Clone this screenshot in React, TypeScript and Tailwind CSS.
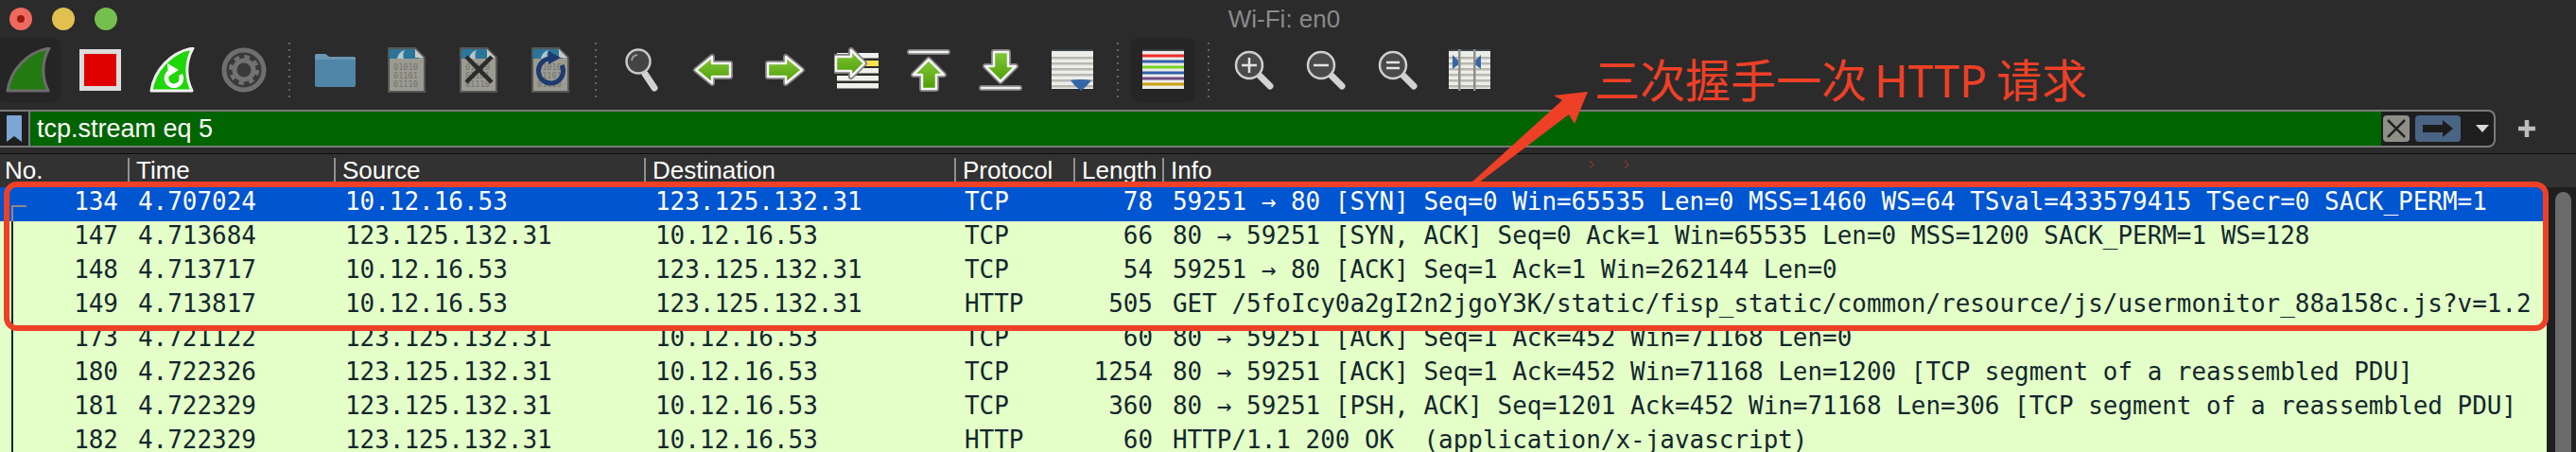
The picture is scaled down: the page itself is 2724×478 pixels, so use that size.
import type { ReactNode } from 'react'

const MONO = "font-['DejaVu_Sans_Mono','Liberation_Mono',monospace]"
const COLS = 'grid grid-cols-[135px_218px_328px_328px_126px_94px_1fr]'

const ROWS = [
  ['134', '4.707024', '10.12.16.53', '123.125.132.31', 'TCP', '78', '59251 → 80 [SYN] Seq=0 Win=65535 Len=0 MSS=1460 WS=64 TSval=433579415 TSecr=0 SACK_PERM=1'],
  ['147', '4.713684', '123.125.132.31', '10.12.16.53', 'TCP', '66', '80 → 59251 [SYN, ACK] Seq=0 Ack=1 Win=65535 Len=0 MSS=1200 SACK_PERM=1 WS=128'],
  ['148', '4.713717', '10.12.16.53', '123.125.132.31', 'TCP', '54', '59251 → 80 [ACK] Seq=1 Ack=1 Win=262144 Len=0'],
  ['149', '4.713817', '10.12.16.53', '123.125.132.31', 'HTTP', '505', 'GET /5foIcy0a2gI2n2jgoY3K/static/fisp_static/common/resource/js/usermonitor_88a158c.js?v=1.2'],
  ['173', '4.721122', '123.125.132.31', '10.12.16.53', 'TCP', '60', '80 → 59251 [ACK] Seq=1 Ack=452 Win=71168 Len=0'],
  ['180', '4.722326', '123.125.132.31', '10.12.16.53', 'TCP', '1254', '80 → 59251 [ACK] Seq=1 Ack=452 Win=71168 Len=1200 [TCP segment of a reassembled PDU]'],
  ['181', '4.722329', '123.125.132.31', '10.12.16.53', 'TCP', '360', '80 → 59251 [PSH, ACK] Seq=1201 Ack=452 Win=71168 Len=306 [TCP segment of a reassembled PDU]'],
  ['182', '4.722329', '123.125.132.31', '10.12.16.53', 'HTTP', '60', 'HTTP/1.1 200 OK  (application/x-javascript)'],
]

const HEADERS = ['No.', 'Time', 'Source', 'Destination', 'Protocol', 'Length', 'Info']

function Icon({ children }: { children: ReactNode }) {
  return <svg width={48} height={48} viewBox="0 0 48 48" fill="none">{children}</svg>
}

function Slot({ pressed, children }: { pressed?: boolean; children: ReactNode }) {
  return (
    <div className="w-[76px] flex justify-center">
      <div className={`w-[68px] h-[68px] rounded-lg flex items-center justify-center ${pressed ? 'bg-[#252525]' : ''}`}>
        {children}
      </div>
    </div>
  )
}

function Sep() {
  return (
    <div className="w-5 flex flex-col items-center gap-[5px]">
      {Array.from({ length: 9 }).map((_, i) => <div key={i} className="w-[2px] h-[2px] bg-[#666]" />)}
    </div>
  )
}

function GreenShape({ id, points }: { id: string; points: string }) {
  return (
    <>
      <defs>
        <linearGradient id={id} x1="0" y1="0" x2="0" y2="1">
          <stop offset="0" stopColor="#82c83a" />
          <stop offset="1" stopColor="#4f9e05" />
        </linearGradient>
      </defs>
      <polygon points={points} fill="none" stroke="#7e7e7e" strokeWidth={6} strokeLinejoin="round" />
      <polygon points={points} fill={`url(#${id})`} stroke="#f4f4f4" strokeWidth={2.5} strokeLinejoin="round" />
    </>
  )
}

const FIN = 'M2 46 C5 25 22 5 46 1 C38 15 38 32 45 46 Z'

function DocIcon({ children }: { children?: ReactNode }) {
  return (
    <Icon>
      <path d="M5 1 H33 L43 11 V47 H5 Z" fill="#9b9b91" stroke="#565656" strokeWidth={2} />
      <path d="M6 2 H32 L37 8 V12 H6 Z" fill="#2a769b" />
      <path d="M14 12 C15 7 18 4 22 3 C20 6 20 9 21 12 Z" fill="#b9c4c6" />
      <path d="M33 2 L42 11 H33 Z" fill="#c9c9c2" />
      {['01010', '01101', '01110'].map((t, i) => (
        <text key={t} x={10} y={24 + i * 9} fontSize={8.6} fill="#74746e" fontFamily="DejaVu Sans Mono, monospace">{t}</text>
      ))}
      {children}
    </Icon>
  )
}

function Lens({ children }: { children?: ReactNode }) {
  return (
    <Icon>
      <path d="M30 30 L41 41" stroke="#d2d2d2" strokeWidth={7} strokeLinecap="round" />
      <circle cx={19} cy={19} r={14} fill="#4a4a4a" stroke="#cfcfcf" strokeWidth={2.5} />
      {children}
    </Icon>
  )
}

function Stripes({ children }: { children?: ReactNode }) {
  return (
    <>
      <rect x={2} y={2} width={44} height={42} fill="#ecece8" />
      <rect x={2} y={2} width={44} height={2} fill="#3a4248" />
      {[10, 16, 22, 28, 34, 40].map(y => <rect key={y} x={2} y={y} width={44} height={2.5} fill="#b8b8b0" />)}
      {children}
    </>
  )
}

function Toolbar() {
  return (
    <div className="h-[68px] flex items-center -ml-2 shrink-0">
      <Slot pressed>
        <Icon>
          <path d={FIN} fill="#237a10" stroke="#6c6c6c" strokeWidth={3} strokeLinejoin="round" />
        </Icon>
      </Slot>
      <Slot>
        <Icon>
          <rect x={2} y={2} width={44} height={44} fill="#dcdcdc" />
          <rect x={7} y={7} width={34} height={34} fill="#e00000" />
        </Icon>
      </Slot>
      <Slot>
        <Icon>
          <path d={FIN} fill="#1fd608" stroke="#f2f2f2" strokeWidth={3} strokeLinejoin="round" />
          <path d="M33 29 A8 8 0 1 1 24 25" stroke="#fff" strokeWidth={4.5} />
          <path d="M19 17 L31 24 L20 31 Z" fill="#fff" />
        </Icon>
      </Slot>
      <Slot>
        <Icon>
          <circle cx={24} cy={24} r={21} fill="#3a3a3a" stroke="#6f6f6f" strokeWidth={5} />
          <circle cx={24} cy={24} r={10} stroke="#727272" strokeWidth={5} />
          <circle cx={24} cy={24} r={14} stroke="#727272" strokeWidth={4} strokeDasharray="5.5 5.5" />
        </Icon>
      </Slot>
      <Sep />
      <Slot>
        <Icon>
          <path d="M3 9 Q3 7 5 7 H14 L18 10 H44 Q46 10 46 12 V40 Q46 42 44 42 H5 Q3 42 3 40 Z" fill="#4f86a8" />
          <path d="M3 13 V9 Q3 7 5 7 H14 L18 10 H44 Q46 10 46 12 V13 Z" fill="#6a97b4" />
        </Icon>
      </Slot>
      <Slot><DocIcon /></Slot>
      <Slot>
        <DocIcon>
          <path d="M11 10 L38 37 M38 10 L11 37" stroke="#2b2b2b" strokeWidth={4.5} />
        </DocIcon>
      </Slot>
      <Slot>
        <DocIcon>
          <path d="M36 19 A13 13 0 1 1 24 12" stroke="#1e3a6e" strokeWidth={5} />
          <path d="M22 4 L35 11 L22 18 Z" fill="#1e3a6e" />
        </DocIcon>
      </Slot>
      <Sep />
      <Slot>
        <Icon>
          <path d="M28 28 L38 43" stroke="#d2d2d2" strokeWidth={7} strokeLinecap="round" />
          <circle cx={21} cy={15} r={12.5} fill="#444" stroke="#c9c9c9" strokeWidth={2.5} />
          <path d="M14 14 A7 7 0 0 1 20 8" stroke="#9a9a9a" strokeWidth={2} />
        </Icon>
      </Slot>
      <Slot>
        <Icon><GreenShape id="g-left" points="6,24 23,10 23,17 42,17 42,31 23,31 23,38" /></Icon>
      </Slot>
      <Slot>
        <Icon><GreenShape id="g-right" points="42,24 25,10 25,17 6,17 6,31 25,31 25,38" /></Icon>
      </Slot>
      <Slot>
        <Icon>
          {[6, 14, 22, 30, 38].map(y => <rect key={y} x={3} y={y} width={44} height={5.5} fill="#efefeb" />)}
          <rect x={32} y={14} width={15} height={6} fill="#fbe04f" />
          <GreenShape id="g-goto" points="32,17 18,3 18,10 2,10 2,25 18,25 18,31" />
        </Icon>
      </Slot>
      <Slot>
        <Icon>
          <path d="M4 5 H44" stroke="#7e7e7e" strokeWidth={6} strokeLinecap="round" />
          <path d="M4 5 H44" stroke="#f0f0f0" strokeWidth={2.5} strokeLinecap="round" />
          <GreenShape id="g-top" points="24,13 40,29 32,29 32,44 17,44 17,29 8,29" />
        </Icon>
      </Slot>
      <Slot>
        <Icon>
          <path d="M4 43 H44" stroke="#7e7e7e" strokeWidth={6} strokeLinecap="round" />
          <path d="M4 43 H44" stroke="#f0f0f0" strokeWidth={2.5} strokeLinecap="round" />
          <GreenShape id="g-bottom" points="24,36 40,20 32,20 32,5 17,5 17,20 8,20" />
        </Icon>
      </Slot>
      <Slot>
        <Icon>
          <Stripes>
            <path d="M22 35 Q32 33 44 35 Q40 41 33 46 Q26 41 22 35 Z" fill="#3467a8" />
          </Stripes>
        </Icon>
      </Slot>
      <Sep />
      <Slot pressed>
        <Icon>
          <rect x={2} y={2} width={44} height={42} fill="#ecece8" />
          <rect x={2} y={2} width={44} height={2} fill="#3a4248" />
          {['#ee2b2b', '#2f5fa8', '#76d321', '#2f5fa8', '#6f4a84', '#c9a010'].map((c, i) => (
            <rect key={i} x={2} y={7.5 + i * 6} width={44} height={3} fill={c} />
          ))}
        </Icon>
      </Slot>
      <Sep />
      <Slot>
        <Lens><path d="M11 19 H27 M19 11 V27" stroke="#e4e4e4" strokeWidth={2.5} /></Lens>
      </Slot>
      <Slot>
        <Lens><path d="M11 19 H27" stroke="#e4e4e4" strokeWidth={2.5} /></Lens>
      </Slot>
      <Slot>
        <Lens><path d="M12 16 H26 M12 22 H26" stroke="#e4e4e4" strokeWidth={2.5} /></Lens>
      </Slot>
      <Slot>
        <Icon>
          <Stripes>
            <path d="M6 8 L14 16 L14 17 L6 23 Z" fill="#3467a8" />
            <path d="M36 8 L28 16 L28 17 L36 23 Z" fill="#3467a8" />
            <rect x={12} y={2} width={2.5} height={44} fill="#8f8f88" />
            <rect x={28} y={2} width={2.5} height={44} fill="#8f8f88" />
          </Stripes>
        </Icon>
      </Slot>
    </div>
  )
}

function FilterBar() {
  return (
    <div className="h-10 flex items-center shrink-0">
      <div className="w-[2639px] h-10 flex border-y-2 border-r-2 border-[#7a7a7a] rounded-r-lg bg-[#1e1e1e]">
        <div className="w-[32px] flex items-center justify-center border-r-2 border-[#7a7a7a]">
          <svg width={18} height={30} viewBox="0 0 18 30">
            <path d="M2 1 H16 Q17 1 17 2 V29 L9 23 L1 29 V2 Q1 1 2 1 Z" fill="#7ea6d4" />
          </svg>
        </div>
        <div className="flex-1 bg-[#006400] text-white text-[27px] pl-[7px] leading-[36px]">
          tcp.stream eq 5
        </div>
        <div className="w-[119px] flex items-center pl-[2px]">
          <div className="w-[28px] h-[28px] rounded bg-[#8f8f88] flex items-center justify-center">
            <svg width={22} height={22} viewBox="0 0 22 22">
              <path d="M2 2 L20 20 M20 2 L2 20" stroke="#222" strokeWidth={2.5} />
            </svg>
          </div>
          <div className="w-[48px] h-[28px] rounded ml-[6px] bg-[#4a6484] flex items-center justify-center">
            <svg width={34} height={20} viewBox="0 0 34 20">
              <path d="M1 6 H22 V1 L33 10 L22 19 V14 H1 Z" fill="#1c1c1c" />
            </svg>
          </div>
          <svg width={14} height={8} viewBox="0 0 14 8" className="ml-[16px]">
            <path d="M0 0 H14 L7 8 Z" fill="#d8d8d8" />
          </svg>
        </div>
      </div>
      <svg width={18} height={18} viewBox="0 0 16 16" className="ml-6">
        <path d="M8 0 V16 M0 8 H16" stroke="#bdbdbd" strokeWidth={4} />
      </svg>
    </div>
  )
}

function PacketList() {
  return (
    <div className="flex-1 relative flex overflow-hidden">
      <div className={`w-[2693px] h-[288px] ${MONO} text-[25.95px]`}>
        {ROWS.map((r, i) => (
          <div
            key={r[0]}
            className={`${COLS} h-9 leading-[30px] whitespace-pre ${i === 0 ? 'bg-[#0055d0] text-white' : 'bg-[#e4ffc7] text-[#12272e]'}`}
          >
            <div className="text-right pr-[10px]">{r[0]}</div>
            <div className="pl-[11px]">{r[1]}</div>
            <div className="pl-[12px]">{r[2]}</div>
            <div className="pl-[12px]">{r[3]}</div>
            <div className="pl-[11px]">{r[4]}</div>
            <div className="text-right pr-[10px]">{r[5]}</div>
            <div className="pl-[11px]">{r[6]}</div>
          </div>
        ))}
      </div>
      <div className="flex-1 bg-[#1f1f1f] pl-[9px]">
        <div className="w-[17px] h-[300px] mt-[5px] rounded-full bg-[#6b6b6b]" />
      </div>
      {/* conversation marker */}
      <div className="absolute left-[12px] top-[19px] w-4 h-[2px] bg-[#8a8a8a]" />
      <div className="absolute left-[12px] top-[19px] w-[2px] h-[17px] bg-[#8a8a8a]" />
      <div className="absolute left-[12px] top-[36px] w-[2px] h-[250px] bg-[#12272e]" />
    </div>
  )
}

export default function App() {
  return (
    <div className="relative w-[2724px] h-[478px] overflow-hidden bg-[#2b2b2b] flex flex-col font-['Liberation_Sans',sans-serif]">
      {/* title bar */}
      <div className="h-10 grid grid-cols-[1fr_auto_1fr] items-center pr-2 shrink-0">
        <div className="flex items-center gap-[21px] pl-[10px]">
          <div className="w-6 h-6 rounded-full bg-[#ee6a5f] flex items-center justify-center">
            <div className="w-2 h-2 rounded-full bg-[#9a1a10]" />
          </div>
          <div className="w-6 h-6 rounded-full bg-[#e1c04f]" />
          <div className="w-6 h-6 rounded-full bg-[#74bf4e]" />
        </div>
        <div className="text-[26px] text-[#8a8a8a]">Wi-Fi: en0</div>
      </div>

      <Toolbar />
      <div className="h-2 shrink-0" />
      <FilterBar />
      <div className="h-[6px] shrink-0" />
      <div className="h-px bg-[#0c0c0c] shrink-0" />

      {/* column headers */}
      <div className={`${COLS} h-[35px] bg-[#323232] text-[26px] text-white leading-[30px] shrink-0`}>
        {HEADERS.map((h, i) => (
          <div key={h} className={`relative whitespace-nowrap pt-[2px] pr-[7px] ${i === 0 ? 'pl-[5px]' : 'pl-[9px]'}`}>
            <div className="overflow-hidden">{h}</div>
            {i > 0 && <div className="absolute left-0 top-[4px] h-[26px] w-[2px] bg-[#8f8f8f]" />}
          </div>
        ))}
      </div>

      <PacketList />

      {/* annotation drawn over the capture */}
      <div className="absolute left-[4px] top-[192px] w-[2691px] h-[158px] rounded-[14px] border-[6px] border-[#ee4026]" />
      <svg className="absolute left-[1550px] top-[90px]" width={135} height={108} viewBox="1550 90 135 108">
        <polygon points="1679,97 1643,101 1652,106 1556,193 1564,193 1659,121 1665,131" fill="#ee4026" />
      </svg>
      <svg className="absolute left-[1680px] top-[168px]" width={44} height={12} viewBox="0 0 44 12">
        <path d="M1 2 L5 6 L1 10 M38 2 L42 6 L38 10" stroke="#b5382a" strokeWidth={1} fill="none" />
      </svg>
      <div className="absolute left-[1686px] top-[48px] text-[48px] leading-[68px] text-[#ee4026] whitespace-pre font-['Noto_Sans_CJK_SC','Noto_Sans',sans-serif]">
        三次握手一次<span className="ml-[8px] mr-[10px] font-['Noto_Sans',sans-serif]">HTTP</span>请求
      </div>
    </div>
  )
}
